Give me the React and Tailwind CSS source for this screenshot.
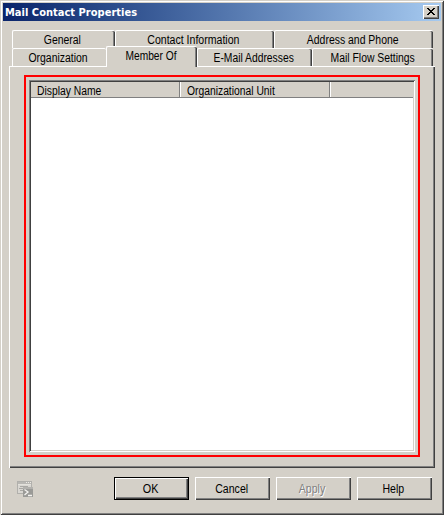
const raised =
  "shadow-[inset_1px_1px_0_#ffffff,inset_-1px_-1px_0_#404040,inset_-2px_-2px_0_#808080]";

function Label({ children, className = "" }) {
  return <span className={`block whitespace-nowrap text-[12px] leading-[14px] ${className}`}>{children}</span>;
}

function Tab({ children, className = "", text = "", selected = false }) {
  return (
    <div
      className={`relative flex shrink-0 justify-center rounded-t-[2px] border-l border-t border-white bg-[#d4d0c8] ${
        selected ? "z-10 h-[21px] -mb-px pt-[2px]" : "h-[18px] pt-[2px]"
      } ${className}`}
    >
      <Label className={text}>{children}</Label>
    </div>
  );
}

const edge = "shadow-[inset_-1px_0_0_#404040,inset_-2px_0_0_#808080]";

function Button({ children, primary = false, disabled = false, text = "" }) {
  return (
    <button
      className={`flex h-[23px] w-[75px] shrink-0 justify-center bg-[#d4d0c8] pr-[2px] ${
        primary ? "border border-black pt-[4px]" : "pt-[5px]"
      } ${raised} ${disabled ? "text-[#808080] [text-shadow:1px_1px_0_#ffffff]" : "text-black"}`}
    >
      <Label className={text}>{children}</Label>
    </button>
  );
}

function ScriptIcon() {
  return (
    <svg width="17" height="17" viewBox="0 0 17 17" shapeRendering="crispEdges">
      <rect x="0.5" y="0.5" width="14" height="12" fill="#d9d7d2" stroke="#b1b0ac" />
      <rect x="1" y="1" width="13" height="2" fill="#b9b8b4" />
      <path d="M9 1.5h1M11 1.5h1M13 1.5h1" stroke="#eeece7" />
      <path d="M1 3.5h13" stroke="#e4e2dc" />
      <path d="M3 5.5h8M2 7.5h5M3 9.5h3" stroke="#a9a8a4" />
      <rect x="6" y="7" width="10" height="9" fill="#9a9a97" />
      <rect x="6" y="6" width="10" height="2" fill="#b2b1ad" />
      <path d="M7.5 8.5l3.5 2.5-3.5 3M11 14.5h4" fill="none" stroke="#f4f3f0" strokeWidth="1.3" shapeRendering="auto" />
    </svg>
  );
}

export default function App() {
  return (
    <div className="flex h-[515px] w-[444px] flex-col overflow-hidden bg-[#d4d0c8] p-[3px] font-['Liberation_Sans',sans-serif] text-black shadow-[inset_1px_1px_0_#d4d0c8,inset_-1px_-1px_0_#404040,inset_2px_2px_0_#ffffff,inset_-2px_-2px_0_#808080]">
      <header className="flex h-[18px] shrink-0 items-center justify-between bg-linear-to-r from-[#0a246a] to-[#a6caf0] pl-[2px] pr-[2px]">
        <h1 className="whitespace-nowrap pt-[2px] font-['DejaVu_Sans_Condensed',sans-serif] text-[11px] font-bold leading-[14px] tracking-[0.02px] text-white">
          Mail Contact Properties
        </h1>
        <button aria-label="Close" className={`flex h-[14px] w-[16px] items-center justify-center bg-[#d4d0c8] pb-px pr-px ${raised}`}>
          <svg width="8" height="7" viewBox="0 0 8 7" shapeRendering="crispEdges">
            <path d="M0 0h2v1h1v1h2V1h1V0h2v1H7v1H6v1H5v1h1v1h1v1h1v1H6V6H5V5H3v1H2v1H0V6h1V5h1V4h1V3H2V2H1V1H0z" />
          </svg>
        </button>
      </header>

      <nav className="ml-[9px] mt-[9px] flex h-[18px] shrink-0">
        <Tab className={`w-[103px] pr-[4px] ${edge}`} text="scale-x-[0.87]">General</Tab>
        <Tab className={`w-[159px] pr-[3px] ${edge}`} text="scale-x-[0.88]">Contact Information</Tab>
        <Tab className={`w-[159px] pr-[2px] ${edge}`} text="scale-x-[0.87]">Address and Phone</Tab>
      </nav>
      <nav className="ml-[9px] mt-[-2px] flex h-[20px] shrink-0 items-end">
        <Tab className="w-[94px] pr-[3px]" text="scale-x-[0.87]">Organization</Tab>
        <Tab selected className={`w-[91px] pr-[2px] ${edge}`} text="scale-x-[0.85]">Member Of</Tab>
        <Tab className={`w-[115px] pr-[3px] ${edge}`} text="scale-x-[0.86]">E-Mail Addresses</Tab>
        <Tab className={`w-[121px] pr-[1px] ${edge}`} text="scale-x-[0.865]">Mail Flow Settings</Tab>
      </nav>

      <main className={`ml-[6px] h-[402px] w-[426px] shrink-0 pl-[15px] pt-[9px] ${raised}`}>
        <section className="h-[382px] w-[396px] border-2 border-[#ff0000] pl-[3px] pt-[3px]">
          <div className="h-[372px] w-[386px] bg-white p-[2px] shadow-[inset_1px_1px_0_#808080,inset_-1px_-1px_0_#ffffff,inset_2px_2px_0_#404040,inset_-2px_-2px_0_#d4d0c8]">
            <div className="flex h-[16px] border-b border-[#808080] bg-[#d4d0c8]">
              <div className="w-[149px] border-r border-[#808080] pl-[6px] pt-[2px]">
                <Label className="origin-left scale-x-[0.86]">Display Name</Label>
              </div>
              <div className="w-[150px] border-l border-r border-l-white border-r-[#808080] pl-[6px] pt-[2px]">
                <Label className="origin-left scale-x-[0.86]">Organizational Unit</Label>
              </div>
              <div className="flex-1 border-l border-white" />
            </div>
          </div>
        </section>
      </main>

      <footer className="mt-[9px] flex shrink-0 pl-[14px]">
        <div className="mt-[4px] w-[97px]">
          <ScriptIcon />
        </div>
        <div className="flex gap-[6px]">
          <Button primary text="scale-x-[0.9]">OK</Button>
          <Button text="scale-x-[0.88]">Cancel</Button>
          <Button disabled text="scale-x-[0.88]">Apply</Button>
          <Button text="scale-x-[0.88]">Help</Button>
        </div>
      </footer>
    </div>
  );
}
